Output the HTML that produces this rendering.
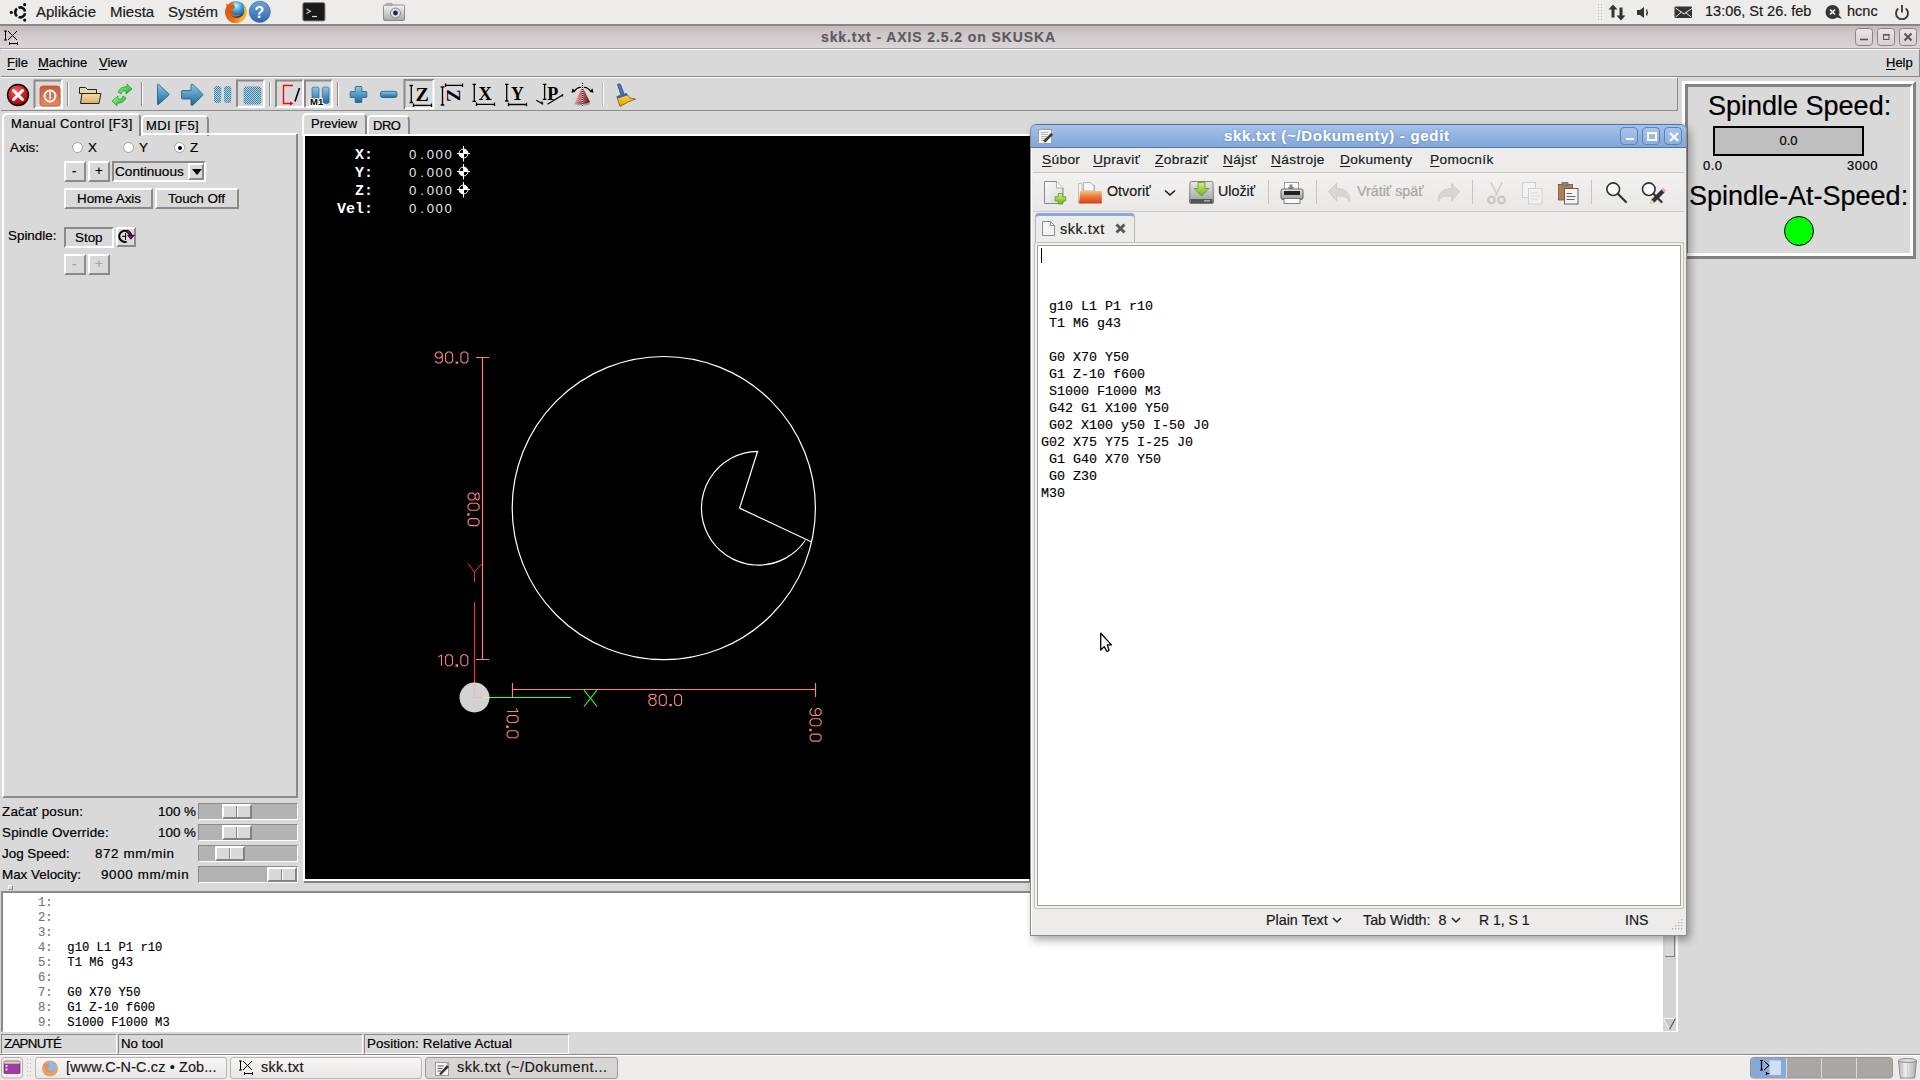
<!DOCTYPE html>
<html><head><meta charset="utf-8">
<style>
*{margin:0;padding:0;box-sizing:border-box}
html,body{width:1920px;height:1080px;overflow:hidden;background:#d9d9d9;font-family:"Liberation Sans",sans-serif;color:#000}
.a{position:absolute}
.t{position:absolute;white-space:pre;line-height:1;-webkit-text-stroke:0.2px currentColor}
.mono{font-family:"Liberation Mono",monospace;-webkit-text-stroke:0.15px currentColor}
/* top panel */
#top{left:0;top:0;width:1920px;height:26px;background:#edeceb;border-bottom:2px solid #8b8685}
#top .t{font-size:15px;top:3.5px;color:#1a1a1a}
/* axis title */
#atitle{left:0;top:26px;width:1920px;height:23px;background:linear-gradient(#c2bcbf,#d0cacd 45%,#d9d4d6);border-bottom:1px solid #a39ea0}
/* menu */
#amenu{left:1px;top:49px;width:1919px;height:28px;background:#d9d9d9;border-top:1px solid #fff;border-bottom:1px solid #8a8a8a;border-right:1px solid #8a8a8a}
.ul{text-decoration:underline;text-underline-offset:2px}
/* toolbar */
#atool{left:1px;top:77px;width:1677px;height:34px;border-top:1px solid #fff;border-right:1px solid #8a8a8a;border-bottom:1px solid #8a8a8a}
.sep{position:absolute;top:84px;width:2px;height:22px;border-left:1px solid #8a8a8a;border-right:1px solid #fff}
.btnsunk{position:absolute;border:2px solid;border-color:#8a8a8a #fff #fff #8a8a8a}
.raised{position:absolute;background:#d9d9d9;border:2px solid;border-color:#fff #8a8a8a #8a8a8a #fff}
.tab{position:absolute;background:#d9d9d9;border:2px solid;border-bottom:none;border-color:#fff #8a8a8a #8a8a8a #fff;border-radius:5px 5px 0 0;font-size:13px}
#preview{left:305px;top:136px;width:726px;height:743px;background:#000;box-shadow:-2px -2px 0 #fff,-2px 2px 0 #fff,-1px 4px 0 #828282}

.radio{position:absolute;width:11px;height:11px;border-radius:50%;background:#fff;border:1px solid #a0a0a0}
.dot{position:absolute;left:3px;top:3px;width:4px;height:4px;border-radius:50%;background:#000}
.trough{position:absolute;left:198px;width:100px;height:17px;background:#b3b3b3;border:1px solid;border-color:#8a8a8a #fff #fff #8a8a8a}
.hdl{position:absolute;top:0;width:30px;height:15px;background:#d9d9d9;border:2px solid;border-color:#fff #828282 #828282 #fff}
.hdl:after{content:"";position:absolute;left:11.5px;top:0;width:1px;height:11px;background:#828282;box-shadow:1px 0 #fff}
.stc{position:absolute;top:1034px;height:20px;border:1px solid;border-color:#8a8a8a #fff #fff #8a8a8a;font-size:13.3px}
.task{position:absolute;top:1057px;height:22px;border:1px solid #b7b4b0;border-radius:3px;background:linear-gradient(#f7f6f5,#e9e8e6);font-size:14.4px;color:#1a1a1a;letter-spacing:0.3px}

.wbtn{position:absolute;top:3px;width:18px;height:18px;border:1px solid #5d82b8;border-radius:4px;background:linear-gradient(#a9c4ea,#8cafdf)}
.gsep{position:absolute;top:56px;width:1px;height:24px;background:#c4c2bf}
.gsep2{position:absolute;top:784px;width:1px;height:22px;background:#d6d4d1}
</style></head><body>

<!-- TOP PANEL -->
<div id="top" class="a">
  <div class="t" style="left:36px">Aplikácie</div>
  <div class="t" style="left:110px">Miesta</div>
  <div class="t" style="left:168px">Systém</div>
  <div class="t" style="left:1705px;font-size:14.5px">13:06, St 26. feb</div>
  <div class="t" style="left:1847px;font-size:14.5px">hcnc</div>
</div>


<svg class="a" style="left:0;top:0" width="1920" height="25">
<defs>
<radialGradient id="ffg" cx="0.55" cy="0.35" r="0.6"><stop offset="0" stop-color="#9fd0f0"/><stop offset="0.6" stop-color="#2f6fb5"/><stop offset="1" stop-color="#1a3f80"/></radialGradient>
<linearGradient id="hlp" x1="0" y1="0" x2="0" y2="1"><stop offset="0" stop-color="#6aa3dc"/><stop offset="1" stop-color="#2f69ad"/></linearGradient>
<linearGradient id="cam" x1="0" y1="0" x2="0" y2="1"><stop offset="0" stop-color="#f4f4f4"/><stop offset="1" stop-color="#a8a8a8"/></linearGradient>
</defs>
<!-- ubuntu logo -->
<path d="M16.99 16.23A5.0 5.0 0 0 1 16.99 8.57M18.49 7.70A5.0 5.0 0 0 1 25.12 11.53M25.12 13.27A5.0 5.0 0 0 1 18.49 17.10" fill="none" stroke="#111" stroke-width="2.6"/><circle cx="11.30" cy="12.40" r="1.6" fill="#111"/><circle cx="24.65" cy="4.69" r="1.6" fill="#111"/><circle cx="24.65" cy="20.11" r="1.6" fill="#111"/>
<!-- firefox -->
<defs><linearGradient id="fxo" x1="0" y1="0" x2="1" y2="0.3"><stop offset="0" stop-color="#d4500c"/><stop offset="0.6" stop-color="#e8741a"/><stop offset="1" stop-color="#f8c030"/></linearGradient>
<radialGradient id="fxb" cx="0.45" cy="0.25" r="0.75"><stop offset="0" stop-color="#c8f4ff"/><stop offset="0.45" stop-color="#3aa0e0"/><stop offset="1" stop-color="#0a3a8a"/></radialGradient></defs>
<circle cx="236" cy="12.2" r="11" fill="url(#fxo)"/>
<circle cx="237" cy="9.8" r="8.2" fill="url(#fxb)"/>
<path d="M226 3.5L229.5 5.5L233.5 4L235 7.2L233 9.3L231.2 12.6Q233.5 15.6 238.5 14.7L241.5 14.2Q239 16.8 234.5 16.5Q229 16 228 11Q227 7 226 3.5z" fill="#dc5a12"/>
<path d="M243.5 4.5Q246.8 8 246.5 13Q246 19 241 22L238.5 21Q244 17 244 11z" fill="#f6b428" opacity="0.9"/>
<!-- help -->
<circle cx="259.8" cy="11.8" r="10.6" fill="url(#hlp)" stroke="#2a5a98" stroke-width="0.6"/>
<text x="254.5" y="18" font-family="Liberation Sans" font-weight="bold" font-size="16px" fill="#fff">?</text>
<!-- terminal -->
<rect x="302.8" y="2.6" width="22.2" height="18.4" rx="1.8" fill="#1a1a1a" stroke="#8a8a8a" stroke-width="1"/>
<path d="M306.5 9l4 2.3-4 2.3" fill="none" stroke="#d8d8d8" stroke-width="1.1"/><path d="M312 16.5h5" stroke="#d8d8d8" stroke-width="1.2"/>
<!-- camera -->
<rect x="383.5" y="5" width="21" height="15.5" rx="1.5" fill="url(#cam)" stroke="#777" stroke-width="0.8"/>
<rect x="386" y="3.3" width="6" height="2.5" fill="#bbb" stroke="#888" stroke-width="0.5"/>
<circle cx="395.5" cy="13" r="5" fill="#ddd" stroke="#777" stroke-width="0.8"/><circle cx="395.5" cy="13" r="2.4" fill="#1a2a50"/>
<!-- right icons -->
<g fill="#bbb"><rect x="1598" y="4" width="1" height="1"/><rect x="1601" y="4" width="1" height="1"/><rect x="1598" y="7" width="1" height="1"/><rect x="1601" y="7" width="1" height="1"/><rect x="1598" y="10" width="1" height="1"/><rect x="1601" y="10" width="1" height="1"/><rect x="1598" y="13" width="1" height="1"/><rect x="1601" y="13" width="1" height="1"/><rect x="1598" y="16" width="1" height="1"/><rect x="1601" y="16" width="1" height="1"/><rect x="1598" y="19" width="1" height="1"/><rect x="1601" y="19" width="1" height="1"/></g>
<path d="M1613 4.5l-4.5 5h3v8h3v-8h3z" fill="#333"/><path d="M1621 20.5l4.5-5h-3v-8h-3v8h-3z" fill="#333"/>
<path d="M1637 10h3l4-3v11l-4-3h-3z" fill="#333"/><path d="M1646.5 9.5q1.5 3 0 6" fill="none" stroke="#333" stroke-width="1.3"/>
<rect x="1674.5" y="6.5" width="17.5" height="11.5" rx="1" fill="#333"/><path d="M1675.5 8l8.5 6 8.5-6M1675.5 17l6-5M1691 17l-6-5" fill="none" stroke="#eee" stroke-width="1"/>
<circle cx="1832.5" cy="12" r="7" fill="#333"/><path d="M1836 17l6 2-3-4z" fill="#333"/><path d="M1830 9.5l5 5M1835 9.5l-5 5" stroke="#eee" stroke-width="1.7"/>
<path d="M1898.3 8.5a6 6 0 1 0 7.4 0" fill="none" stroke="#333" stroke-width="1.8"/><path d="M1902 5v7.5" stroke="#333" stroke-width="1.8"/>
</svg>

<!-- AXIS TITLE -->
<div id="atitle" class="a">
  <div class="t" style="left:821px;top:4px;font-size:14px;font-weight:bold;color:#5e5a5c;letter-spacing:0.9px">skk.txt - AXIS 2.5.2 on SKUSKA</div>
</div>


<svg class="a" style="left:0;top:25px" width="1920" height="24" style="overflow:visible">
<g stroke="#000" stroke-width="1" fill="none"><path d="M5.5 6V15M4 6h3M4 15h3"/><path d="M8 6l9 9M17 6l-9 9"/><path d="M9.5 18.5h8M9.5 17v3M17.5 17v3" /></g>
<defs><linearGradient id="tbb" x1="0" y1="0" x2="0" y2="1"><stop offset="0" stop-color="#ebe5e8"/><stop offset="1" stop-color="#d6d0d3"/></linearGradient></defs>
<g><rect x="1855.5" y="3.5" width="17" height="17" rx="3" fill="url(#tbb)" stroke="#8a8486"/><path d="M1860 14.5h8" stroke="#555" stroke-width="1.6"/>
<rect x="1877.5" y="3.5" width="17" height="17" rx="3" fill="url(#tbb)" stroke="#8a8486"/><rect x="1883.5" y="9.5" width="5.5" height="5" fill="none" stroke="#555" stroke-width="1"/><path d="M1883 9.8h6.5" stroke="#555" stroke-width="1.6"/>
<rect x="1899.5" y="3.5" width="17" height="17" rx="3" fill="url(#tbb)" stroke="#8a8486"/><path d="M1904.5 8.5l7 7M1911.5 8.5l-7 7" stroke="#555" stroke-width="2"/></g>
</svg>

<!-- MENU -->
<div id="amenu" class="a">
  <div class="t" style="left:6px;top:6px;font-size:13px"><span class="ul">F</span>ile</div>
  <div class="t" style="left:37px;top:6px;font-size:13px"><span class="ul">M</span>achine</div>
  <div class="t" style="left:98px;top:6px;font-size:13px"><span class="ul">V</span>iew</div>
  <div class="t" style="left:1885px;top:6px;font-size:13px"><span class="ul">H</span>elp</div>
</div>

<!-- TOOLBAR -->
<div id="atool" class="a"></div>


<!-- TOOLBAR ICONS -->
<svg class="a" style="left:0;top:76px" width="660" height="36" viewBox="0 76 660 36">
<defs>
<radialGradient id="gr" cx="0.4" cy="0.3" r="0.7"><stop offset="0" stop-color="#ff5a5a"/><stop offset="1" stop-color="#a00000"/></radialGradient>
<linearGradient id="gb" x1="0" y1="0" x2="0" y2="1"><stop offset="0" stop-color="#8cc6e4"/><stop offset="1" stop-color="#1c6a9c"/></linearGradient>
<linearGradient id="gf" x1="0" y1="0" x2="0" y2="1"><stop offset="0" stop-color="#f6dca8"/><stop offset="1" stop-color="#d8b068"/></linearGradient>
<linearGradient id="gg" x1="0" y1="0" x2="1" y2="1"><stop offset="0" stop-color="#9cff9c"/><stop offset="1" stop-color="#10b010"/></linearGradient>
<linearGradient id="go" x1="0" y1="0" x2="0" y2="1"><stop offset="0" stop-color="#c4603c"/><stop offset="1" stop-color="#dd8a66"/></linearGradient>
<linearGradient id="gc" x1="0" y1="0" x2="1" y2="0"><stop offset="0" stop-color="#f0a0a0"/><stop offset="0.5" stop-color="#d05a50"/><stop offset="1" stop-color="#5a1010"/></linearGradient>
<linearGradient id="gy" x1="0" y1="0" x2="0" y2="1"><stop offset="0" stop-color="#ffe040"/><stop offset="1" stop-color="#e09a00"/></linearGradient>
<pattern id="dots" width="2" height="2" patternUnits="userSpaceOnUse"><rect width="1" height="1" fill="#2a6e9a"/><rect x="1" y="1" width="1" height="1" fill="#2a6e9a"/><rect x="1" width="1" height="1" fill="#a8d4ea"/><rect y="1" width="1" height="1" fill="#a8d4ea"/></pattern>
</defs>
<!-- estop -->
<circle cx="18" cy="95" r="10.5" fill="url(#gr)" stroke="#000" stroke-width="1.3"/>
<path d="M13.5 90.5l9 9M22.5 90.5l-9 9" stroke="#fff" stroke-width="3" stroke-linecap="round"/>
<!-- power sunken -->
<path d="M34.5 108V80.5H62" fill="none" stroke="#8a8a8a" stroke-width="2"/>
<path d="M35 108H62V80" fill="none" stroke="#fff" stroke-width="2"/>
<rect x="40" y="86" width="20" height="20" rx="3" fill="url(#go)" stroke="#d04a2a" stroke-width="0.8"/>
<circle cx="50" cy="96" r="5.5" fill="none" stroke="#fff" stroke-width="1.8"/>
<path d="M50 92V99" stroke="#fff" stroke-width="1.6"/>
<!-- sep -->
<path d="M67.5 82V106" stroke="#8a8a8a"/><path d="M68.5 82V106" stroke="#fff"/>
<!-- folder -->
<path d="M79.5 87.5h6l2 2h9v4h-17z" fill="#eed7a6" stroke="#222" stroke-width="1"/>
<path d="M80.5 103.5l1.5-10h19l-2 10z" fill="url(#gf)" stroke="#222" stroke-width="1"/>
<!-- reload -->
<path d="M118 92 Q121 86 127 87 L127 84 L132 89 L126 94 L126 91 Q122 90 121 94z" fill="url(#gg)" stroke="#0a8a0a" stroke-width="0.6"/>
<path d="M126 98 Q123 104 117 103 L117 106 L112 101 L118 96 L118 99 Q122 100 123 96z" fill="url(#gg)" stroke="#0a8a0a" stroke-width="0.6"/>
<!-- sep -->
<path d="M141.5 82V106" stroke="#8a8a8a"/><path d="M142.5 82V106" stroke="#fff"/>
<!-- play -->
<path d="M157.5 85.5 Q157 83.5 159 84.8 L168.5 93.5 Q169.5 94.5 168.5 95.5 L159 104 Q157 105.5 157.5 103.5z" fill="url(#gb)" stroke="#1a5a88" stroke-width="0.8"/>
<!-- step -->
<path d="M182.5 90.5h8.5v-5.5q0.5-1.5 2-0.5l9.5 9.5q0.7 0.8 0 1.6l-9.5 9.5q-1.5 1-2-0.5v-5.6h-8.5q-1-0-1-1v-6.5q0-1 1-1z" fill="url(#gb)" stroke="#1a5a88" stroke-width="0.8"/>
<!-- pause -->
<rect x="214" y="86" width="7.3" height="17" rx="2.5" fill="url(#dots)" opacity="0.85"/>
<rect x="224" y="86" width="7.3" height="17" rx="2.5" fill="url(#dots)" opacity="0.85"/>
<!-- stop sunken -->
<path d="M237 107V80.5H264" fill="none" stroke="#8a8a8a" stroke-width="2"/>
<path d="M237.5 107H264V80.5" fill="none" stroke="#fff" stroke-width="2"/>
<rect x="243.6" y="86.4" width="17.8" height="18.2" rx="2.5" fill="url(#dots)" opacity="0.85"/>
<path d="M269.5 82V106" stroke="#8a8a8a"/><path d="M270.5 82V106" stroke="#fff"/>
<!-- block delete sunken -->
<path d="M276 107V80.5H303" fill="none" stroke="#8a8a8a" stroke-width="2"/>
<path d="M276.5 107H303V80.5" fill="none" stroke="#fff" stroke-width="2"/>
<path d="M293 85.5H283.5V103.5H291" fill="none" stroke="#ff0000" stroke-width="1.3"/>
<path d="M290 101.5l3.5 2-3.5 2z" fill="#ff0000"/>
<path d="M299.5 88L295 101.5" stroke="#000" stroke-width="1.6"/>
<!-- M1 sunken -->
<path d="M305 107V80.5H332" fill="none" stroke="#8a8a8a" stroke-width="2"/>
<path d="M305.5 107H332V80.5" fill="none" stroke="#fff" stroke-width="2"/>
<rect x="312" y="87" width="7" height="16.5" rx="2" fill="url(#gb)" stroke="#1a5a88" stroke-width="0.6"/>
<rect x="322.3" y="87" width="6.8" height="16.5" rx="2" fill="url(#gb)" stroke="#1a5a88" stroke-width="0.6"/>
<text x="310" y="104.5" font-family="Liberation Sans" font-size="9.5px" font-weight="bold" fill="#000" stroke="#fff" stroke-width="2" paint-order="stroke">M1</text>
<path d="M337.5 82V106" stroke="#8a8a8a"/><path d="M338.5 82V106" stroke="#fff"/>
<!-- plus minus -->
<path d="M356 86.5h5q0.8 0 0.8 0.8v4.2h4.2q0.8 0 0.8 0.8v4.4q0 0.8-0.8 0.8h-4.2v4.2q0 0.8-0.8 0.8h-5q-0.8 0-0.8-0.8v-4.2h-4.2q-0.8 0-0.8-0.8v-4.4q0-0.8 0.8-0.8h4.2v-4.2q0-0.8 0.8-0.8z" fill="url(#gb)" stroke="#1a5a88" stroke-width="0.8"/>
<rect x="380.5" y="91.3" width="16.5" height="6.2" rx="2" fill="url(#gb)" stroke="#1a5a88" stroke-width="0.8"/>
<!-- Z sunken -->
<path d="M404.5 109V80H434" fill="none" stroke="#8a8a8a" stroke-width="2"/>
<path d="M405 108.5H433.5V80" fill="none" stroke="#fff" stroke-width="2"/>
<g stroke="#000" stroke-width="1.3" fill="none">
<path d="M411.3 85.5V102.5M409.5 85.5H413M409.5 102.5H413"/>
<path d="M413.5 105.3H431.5M413.5 103.5V107M431.5 103.5V107"/>
<path d="M442.5 87V105M440.7 87H444.3M440.7 105H444.3"/>
<path d="M445.5 85.3H462.5M445.5 83.5V87M462.5 83.5V87"/>
<path d="M474.3 84.3V101.3M472.5 84.3H476M472.5 101.3H476"/>
<path d="M476.5 104.3H494.5M476.5 102.5V106M494.5 102.5V106"/>
<path d="M506.7 84.3V101M505 84.3H508.5M505 101H508.5"/>
<path d="M508.5 104.5H526.5M508.5 102.7V106.3M526.5 102.7V106.3"/>
<path d="M544.6 84.3V99.3M542.8 84.3H546.4M542.8 99.3H546.4"/>
<path d="M536.3 100.2L543.3 104.3M542 101.5V104.3"/>
<path d="M547.5 104.3L563 94.8M562.5 94V96.5"/>
</g>
<g font-family="Liberation Serif" font-weight="bold" fill="#000">
<text x="415.5" y="101.2" font-size="19.5px" textLength="13.3" lengthAdjust="spacingAndGlyphs">Z</text>
<text transform="translate(446.5 90) rotate(90) skewX(-12)" font-size="15px" y="0" x="0" style="display:none">Z</text>
<text x="478.6" y="99.9" font-size="19.5px" textLength="13.3" lengthAdjust="spacingAndGlyphs">X</text>
<text x="511" y="99.9" font-size="19.5px" textLength="12.8" lengthAdjust="spacingAndGlyphs">Y</text>
<text x="547.3" y="99.9" font-size="19.5px" textLength="11" lengthAdjust="spacingAndGlyphs">P</text>
</g>
<text transform="translate(446.5 89.3) rotate(90)" font-family="Liberation Serif" font-weight="bold" font-size="19.5px" x="0" y="0" textLength="12.5" lengthAdjust="spacingAndGlyphs">Z</text>
<!-- cone -->
<path d="M582.5 87 L575 102 Q582.5 106 590 102z" fill="url(#gc)"/>
<ellipse cx="582.5" cy="103.5" rx="8" ry="2" fill="#333" opacity="0.35"/>
<path d="M582.5 83V107" stroke="#fff" stroke-width="1.2"/><path d="M582.5 83V107" stroke="#000" stroke-width="1.2" stroke-dasharray="1 1"/>
<path d="M573.5 92 Q578 86.5 581 87.5M591.5 92 Q587 86.5 584 87.5" fill="none" stroke="#000" stroke-width="1.3"/>
<path d="M571.5 93l1-4.5 3 2.5zM593.5 93l-1-4.5-3 2.5z" fill="#000"/>
<path d="M603.5 82V106" stroke="#fff"/><path d="M602.5 82V106" stroke="#8a8a8a" opacity="0.4"/>
<!-- broom -->
<path d="M617.5 84.5 Q619 83 620.5 84.5 L624.5 95 L621.5 96.5z" fill="#4a74c8" stroke="#1a3a7a" stroke-width="0.7"/>
<path d="M617 96.5 L626.5 93.5 L630 98 L635.5 99 L628 102 L620 106.5 Q618 101 617 96.5z" fill="url(#gy)" stroke="#6a4a00" stroke-width="0.7"/>
<path d="M616.5 96.5 L626.5 93.3 L627.5 95.5 L617.5 98.5z" fill="#3a64b8"/>
</svg>

<!-- TABS -->
<div class="tab" style="left:2px;top:113px;width:139px;height:23px"><span class="t" style="left:7px;top:2px;letter-spacing:0.4px">Manual Control [F3]</span></div>
<div class="tab" style="left:141px;top:115px;width:68px;height:21px"><span class="t" style="left:3px;top:2px;letter-spacing:0.4px">MDI [F5]</span></div>
<div class="tab" style="left:302px;top:113px;width:65px;height:23px"><span class="t" style="left:7px;top:2px">Preview</span></div>
<div class="tab" style="left:367px;top:115px;width:43px;height:21px"><span class="t" style="left:4px;top:2px;letter-spacing:-0.5px">DRO</span></div>

<!-- LEFT PANEL -->
<div class="a" style="left:141px;top:133px;width:156px;height:2px;background:#fff"></div>
<div class="a" style="left:2px;top:134px;width:296px;height:664px;border:2px solid;border-color:#fff #8a8a8a #8a8a8a #fff;border-top:none"></div>

<!-- PREVIEW -->
<div id="preview" class="a"></div>
<svg class="a" style="left:305px;top:136px" width="726" height="744" viewBox="305 136 726 744">
<g fill="none" stroke-width="1.2">
<circle cx="663.8" cy="508.1" r="151.6" stroke="#fff"/>
<path d="M739.6 508.1 L811.6 542.0" stroke="#fff"/>
<path d="M805.2 540.5 A56.9 56.9 0 1 1 757.6 451.3 L739.6 508.1" stroke="#fff"/>
<!-- Y dimension -->
<path d="M482.5 357.5V659.5M476 357.5H489M476 659.5H489" stroke="#f88282"/>
<path d="M474.5 602V697.5" stroke="#ff2a2a"/>
<path d="M512.5 689.5H816M512.5 683V697M815.5 683V697" stroke="#f88282"/>
<path d="M474.5 697.5H571" stroke="#33ff33"/>
<path d="M584 690L597 706.5M597 690L584 706.5" stroke="#33ff33"/>
<path d="M468 563.5L474.5 572L482 563.5M474.5 572V582" stroke="#ff3030" stroke-width="1"/>
</g>
<circle cx="474.5" cy="697.5" r="15" fill="#d2d2d2"/>
<path d="M474.5 682V697.5H490" fill="none" stroke="#ffb0b0" stroke-width="1"/>
<path d="M482.5 697.5H490" fill="none" stroke="#b0ffb0" stroke-width="1"/>
<defs>
<path id="g0" d="M2.5 0.5H5.5L7.5 2.5V9.5L5.5 11.5H2.5L0.5 9.5V2.5Z"/>
<path id="g8" d="M1.5 0.5H6.5L7.5 1.5V2.5L5.5 4.5H2.5L0.5 2.5V1.5ZM2.5 4.5H5.5L7.5 6.5V9.5L5.5 11.5H2.5L0.5 9.5V6.5Z"/>
<path id="g9" d="M7.5 4.5L5.5 6.5H2.5L0.5 4.5V2.5L2.5 0.5H5.5L7.5 2.5V9.5L5.5 11.5H2.5L0.5 9.5"/>
<path id="g1" d="M0.5 2.5L3.5 0.8V11.5"/>
<path id="gd" d="M0.8 10.5H2.2V11.8H0.8Z"/>
</defs><g fill="none" stroke="#f88282" stroke-width="1.1"><g transform="translate(434.8 351.5)"><use href="#g9" x="0.0"/><use href="#g0" x="10.3"/><use href="#gd" x="20.6"/><use href="#g0" x="25.6"/></g><g transform="translate(438 654.3)"><use href="#g1" x="0.0"/><use href="#g0" x="7.0"/><use href="#gd" x="17.3"/><use href="#g0" x="22.3"/></g><g transform="translate(648.5 694)"><use href="#g8" x="0.0"/><use href="#g0" x="10.3"/><use href="#gd" x="20.6"/><use href="#g0" x="25.6"/></g><g transform="translate(518.6 708) rotate(90)"><use href="#g1" x="0.0"/><use href="#g0" x="7.0"/><use href="#gd" x="17.3"/><use href="#g0" x="22.3"/></g><g transform="translate(821.6 708) rotate(90)"><use href="#g9" x="0.0"/><use href="#g0" x="10.3"/><use href="#gd" x="20.6"/><use href="#g0" x="25.6"/></g><g transform="translate(479.6 492.5) rotate(90)"><use href="#g8" x="0.0"/><use href="#g0" x="10.3"/><use href="#gd" x="20.6"/><use href="#g0" x="25.6"/></g></g>
<g font-family="Liberation Mono" font-weight="bold" font-size="15px" fill="#fff">
<text x="355" y="159">X:</text><text x="355" y="177">Y:</text><text x="355" y="195">Z:</text><text x="337" y="213">Vel:</text>
<g font-family="Liberation Sans" font-weight="normal" font-size="13.2px" fill="#e8e8e8"><text x="409 420.3 426.8 435.6 444.4" y="159">0.000</text><text x="409 420.3 426.8 435.6 444.4" y="177">0.000</text><text x="409 420.3 426.8 435.6 444.4" y="195">0.000</text><text x="409 420.3 426.8 435.6 444.4" y="213">0.000</text></g>
</g>
<g fill="#fff" stroke="#fff">
<g id="hm"><path d="M463.5 153.5V149A4.5 4.5 0 0 1 468 153.5zM463.5 153.5V158A4.5 4.5 0 0 1 459 153.5z" stroke="none"/><circle cx="463.5" cy="153.5" r="4.5" fill="none" stroke-width="1"/><path d="M457 153.5H470M463.5 146V161.5" stroke-width="1"/></g>
<use href="#hm" y="18"/><use href="#hm" y="36"/>
</g>
</svg>



<!-- LEFT PANEL CONTENT -->
<div id="lp" style="font-size:13.4px">
  <div class="t" style="left:10px;top:141px">Axis:</div>
  <div class="radio" style="left:72px;top:142px"></div><div class="t" style="left:88px;top:141px">X</div>
  <div class="radio" style="left:123px;top:142px"></div><div class="t" style="left:139px;top:141px">Y</div>
  <div class="radio" style="left:174px;top:142px"><div class="dot"></div></div><div class="t" style="left:190px;top:141px">Z</div>
  <div class="raised" style="left:64px;top:161px;width:22px;height:21px"></div><div class="t" style="left:72px;top:164px">-</div>
  <div class="raised" style="left:88px;top:161px;width:22px;height:21px"></div><div class="t" style="left:95px;top:164px">+</div>
  <div class="a" style="left:112px;top:161px;width:94px;height:21px;border:2px solid;border-color:#8a8a8a #fff #fff #8a8a8a"></div>
  <div class="t" style="left:115px;top:165px;font-size:13.6px">Continuous</div>
  <div class="raised" style="left:188px;top:163px;width:16px;height:17px"></div>
  <div class="a" style="left:192px;top:169px;width:0;height:0;border-left:5px solid transparent;border-right:5px solid transparent;border-top:6px solid #000"></div>
  <div class="raised" style="left:64px;top:188px;width:89px;height:21px"></div><div class="t" style="left:77px;top:192px">Home Axis</div>
  <div class="raised" style="left:155px;top:188px;width:84px;height:21px"></div><div class="t" style="left:168px;top:192px">Touch Off</div>
  <div class="t" style="left:8px;top:229px">Spindle:</div>
  <div class="btnsunk" style="left:64px;top:227px;width:50px;height:21px;background:#d9d9d9"></div><div class="t" style="left:75px;top:231px">Stop</div>
  <div class="raised" style="left:116px;top:227px;width:20px;height:20px"></div>
  <svg class="a" style="left:112px;top:224px" width="28" height="26" viewBox="112 224 28 26"><path d="M126.7 241.6A5.6 5.6 0 1 1 128.4 232" fill="none" stroke="#000" stroke-width="1.9"/><path d="M122.2 236.4H126.3M125.5 233.2V240" stroke="#000" stroke-width="1"/><path d="M126.5 231.3Q129.8 231.8 130.8 235.5" fill="none" stroke="#000" stroke-width="3"/><path d="M126.5 231.3Q129.8 231.8 130.8 235.5" fill="none" stroke="#8b008b" stroke-width="1.6"/><path d="M127.5 235.2L134.3 235.2L130.8 239.2z" fill="#8b008b" stroke="#000" stroke-width="0.8"/></svg>
  <div class="raised" style="left:64px;top:254px;width:22px;height:21px"></div><div class="t" style="left:72px;top:257px;color:#a3a3a3">-</div>
  <div class="raised" style="left:88px;top:254px;width:22px;height:21px"></div><div class="t" style="left:95px;top:257px;color:#a3a3a3">+</div>
</div>

<!-- SLIDERS -->
<div style="font-size:13.4px">
  <div class="t" style="left:2px;top:805px;letter-spacing:0.2px">Začať posun:</div><div class="t" style="left:158px;top:805px">100 %</div>
  <div class="trough" style="top:803px"><div class="hdl" style="left:23px"></div></div>
  <div class="t" style="left:2px;top:826px;letter-spacing:0.2px">Spindle Override:</div><div class="t" style="left:158px;top:826px">100 %</div>
  <div class="trough" style="top:824px"><div class="hdl" style="left:23px"></div></div>
  <div class="t" style="left:2px;top:847px">Jog Speed:</div><div class="t" style="left:95px;top:847px;letter-spacing:0.6px">872 mm/min</div>
  <div class="trough" style="top:845px"><div class="hdl" style="left:16px"></div></div>
  <div class="t" style="left:2px;top:868px">Max Velocity:</div><div class="t" style="left:101px;top:868px;letter-spacing:0.65px">9000 mm/min</div>
  <div class="trough" style="top:866px"><div class="hdl" style="left:68px"></div></div>
  <div class="a" style="left:8px;top:885px;width:5px;height:5px;border:1px solid #8a8a8a;border-top-color:#fff;border-left-color:#fff"></div>
</div>

<!-- TEXT AREA -->
<div class="a" style="left:1px;top:891px;width:1677px;height:142px;background:#fff;border:2px solid;border-color:#8a8a8a #fff #fff #8a8a8a"></div>
<div class="a mono" style="left:8.8px;top:896.4px;font-size:12.2px;line-height:15px;color:#000;white-space:pre"><span style="color:#777">    1: </span>
<span style="color:#777">    2: </span>
<span style="color:#777">    3: </span>
<span style="color:#777">    4: </span> g10 L1 P1 r10
<span style="color:#777">    5: </span> T1 M6 g43
<span style="color:#777">    6: </span>
<span style="color:#777">    7: </span> G0 X70 Y50
<span style="color:#777">    8: </span> G1 Z-10 f600
<span style="color:#777">    9: </span> S1000 F1000 M3</div>
<div class="a" style="left:1663px;top:893px;width:12.5px;height:138px;background:#d4d4d4"></div>
<div class="a" style="left:1665px;top:893px;width:10px;height:64px;background:#d9d9d9;border-right:1.5px solid #828282;border-bottom:1.5px solid #828282"></div>
<svg class="a" style="left:1663px;top:1018px" width="13" height="12"><path d="M0.5 0.5H12.5L6.5 11.5z" fill="#c8c8c8" stroke="#fff" stroke-width="0.8"/><path d="M12.5 0.5L6.5 11.5" stroke="#555" stroke-width="1.2"/></svg>

<!-- STATUS BAR -->
<div class="a" style="left:1px;top:1032px;width:1919px;height:21px;background:#d9d9d9"></div>
<div class="stc" style="left:1px;width:116px"><span class="t" style="left:2px;top:2px;letter-spacing:-0.7px">ZAPNUTÉ</span></div>
<div class="stc" style="left:118px;width:245px"><span class="t" style="left:2px;top:2px">No tool</span></div>
<div class="stc" style="left:364px;width:205px"><span class="t" style="left:2px;top:2px;letter-spacing:0.1px">Position: Relative Actual</span></div>

<!-- TASKBAR -->
<div class="a" style="left:0;top:1054px;width:1920px;height:26px;background:#edeceb;border-top:1px solid #8e8a87;box-shadow:inset 0 1px 0 #fff"></div>
<div class="task" style="left:35px;width:192px"><span class="t" style="left:30px;top:2px;letter-spacing:0.15px">[www.C-N-C.cz • Zob...</span></div>
<div class="task" style="left:230px;width:192px"><span class="t" style="left:30px;top:2px">skk.txt</span></div>
<div class="task" style="left:425px;width:193px;background:#d8d6d3;border-color:#9d9a96"><span class="t" style="left:31px;top:2px;letter-spacing:0.5px">skk.txt (~/Dokument...</span></div>



<!-- SPINDLE WIDGET -->
<div class="a" style="left:1682px;top:81px;width:234px;height:178px;border:3px solid;border-color:#fff #828282 #828282 #fff"></div>
<div class="a" style="left:1685px;top:84px;width:228px;height:172px;border:3px solid;border-color:#828282 #fff #fff #828282"></div>
<div class="t" style="left:1708px;top:92.5px;font-size:27px">Spindle Speed:</div>
<div class="a" style="left:1713px;top:126px;width:151px;height:30px;background:#bebebe;border:2px solid #000"></div>
<div class="t" style="left:1713px;width:151px;text-align:center;top:134px;font-size:13px">0.0</div>
<div class="t" style="left:1703px;top:159px;font-size:13px;letter-spacing:0.5px">0.0</div>
<div class="t" style="left:1847px;top:159px;font-size:13px;letter-spacing:0.5px">3000</div>
<div class="t" style="left:1689px;top:182.5px;font-size:27px">Spindle-At-Speed:</div>
<div class="a" style="left:1784px;top:216px;width:30px;height:30px;border-radius:50%;background:#00ff00;border:1px solid #000"></div>

<!-- GEDIT WINDOW -->
<div class="a" style="left:1030px;top:124px;width:657px;height:812px;box-shadow:3px 4px 8px rgba(0,0,0,0.35);border-radius:6px 6px 0 0"></div>
<div class="a" style="left:1030px;top:124px;width:657px;height:812px;background:#edeceb;border:1px solid #8d8b88;box-shadow:inset 1px 0 0 #fff;border-top:none;border-radius:6px 6px 0 0;overflow:hidden">
  <div class="a" style="left:-1px;top:0;width:657px;height:24px;background:linear-gradient(#a7c2e8,#8eb0de 60%,#83a7da);border:1px solid #4a74b0;border-radius:6px 6px 0 0"></div>
  <div class="t" style="left:193px;top:4px;font-size:15px;font-weight:bold;color:#fff;letter-spacing:0.7px;text-shadow:0 0 2px #4a6fa0">skk.txt (~/Dokumenty) - gedit</div>
  <div class="wbtn" style="left:589px"><div class="a" style="left:5px;top:10px;width:8px;height:2px;background:#fff"></div></div>
  <div class="wbtn" style="left:611px"><div class="a" style="left:4px;top:4px;width:10px;height:9px;border:2px solid #fff"></div></div>
  <div class="wbtn" style="left:633px"><svg class="a" style="left:3px;top:3px" width="12" height="12"><path d="M2 2L10 10M10 2L2 10" stroke="#fff" stroke-width="2.2"/></svg></div>
  <!-- gedit icon -->
  <svg class="a" style="left:7px;top:4px" width="17" height="17" viewBox="0 0 17 17"><rect x="0.5" y="1.5" width="13" height="14" fill="#f6f6f6" stroke="#a0a0a0"/><path d="M3 4.5h7M3 6.5h7M3 8.5h6M3 10.5h5M3 12.5h4" stroke="#9a9a9a" stroke-width="0.7"/><path d="M5.2 12.8L13.3 4.7l1.9 1.9-8.1 8.1z" fill="#3a3a3a"/><path d="M13.3 4.7l1.2-1.2 1.9 1.9-1.2 1.2z" fill="#e8a0d8"/><path d="M5.2 12.8l1.9 1.9-2.6 0.9z" fill="#f0e090"/></svg>
  <!-- menu -->
  <div style="font-size:13.7px;color:#1a1a1a;letter-spacing:0.35px">
  <div class="t" style="left:11px;top:29px"><span class="ul">S</span>úbor</div>
  <div class="t" style="left:62px;top:29px"><span class="ul">U</span>praviť</div>
  <div class="t" style="left:124px;top:29px"><span class="ul">Z</span>obraziť</div>
  <div class="t" style="left:192px;top:29px"><span class="ul">N</span>ájsť</div>
  <div class="t" style="left:240px;top:29px"><span class="ul">N</span>ástroje</div>
  <div class="t" style="left:309px;top:29px"><span class="ul">D</span>okumenty</div>
  <div class="t" style="left:399px;top:29px"><span class="ul">P</span>omocník</div>
  </div>
  <div class="a" style="left:2px;top:48px;width:651px;height:40px;background:linear-gradient(#f2f1f0,#e9e8e6);border-top:1px solid #c9c7c4;border-bottom:1px solid #c9c7c4"></div>
  <div style="font-size:14.3px;color:#1a1a1a">
  <div class="t" style="left:76px;top:60px">Otvoriť</div>
  <div class="t" style="left:187px;top:60px">Uložiť</div>
  <div class="t" style="left:326px;top:60px;color:#a6a5a3">Vrátiť späť</div>
  </div>
  <div class="gsep" style="left:237px"></div><div class="gsep" style="left:285px"></div><div class="gsep" style="left:441px"></div><div class="gsep" style="left:560px"></div>
  <!-- tab -->
  <div class="a" style="left:4px;top:89px;width:100px;height:31px;background:#edeceb;border:1px solid #b8b5b1;border-bottom:none;border-radius:4px 4px 0 0;border-top:3px solid #86a9da"></div>
  <div class="a" style="left:104px;top:118px;width:549px;height:1px;background:#b8b5b1"></div>
  <div class="t" style="left:29px;top:98px;font-size:14.3px;color:#1a1a1a;letter-spacing:0.6px">skk.txt</div>
  <svg class="a" style="left:83px;top:98px" width="13" height="13"><path d="M2.5 2.5L10.5 10.5M10.5 2.5L2.5 10.5" stroke="#585858" stroke-width="3"/></svg>
  <svg class="a" style="left:10px;top:96px" width="15" height="17"><path d="M1.5 1.5h8l4 4v10h-12z" fill="#f5f5f5" stroke="#8e8e8e"/><path d="M9.5 1.5v4h4" fill="none" stroke="#8e8e8e"/></svg>
  <!-- text view -->
  <div class="a" style="left:3px;top:118px;width:650px;height:667px;background:#fff;border:1px solid #c4c1bd;border-radius:2px;box-shadow:inset 0 0 0 2px #f2f1f0,inset 0 0 0 3px #a3a09c"></div>
  <div class="a" style="left:10px;top:124px;width:1px;height:15px;background:#000"></div>
  <div class="a mono" style="left:10px;top:123px;font-size:13.33px;line-height:17px;white-space:pre;color:#000">


 g10 L1 P1 r10
 T1 M6 g43

 G0 X70 Y50
 G1 Z-10 f600
 S1000 F1000 M3
 G42 G1 X100 Y50
 G02 X100 y50 I-50 J0
G02 X75 Y75 I-25 J0
 G1 G40 X70 Y50
 G0 Z30
M30</div>
  <!-- status bar -->
  <div style="font-size:14.3px;color:#1a1a1a">
  <div class="t" style="left:235px;top:789px">Plain Text</div>
  <svg class="a" style="left:301px;top:793px" width="10" height="7"><path d="M1 1l4 4 4-4" fill="none" stroke="#222" stroke-width="1.5"/></svg>
  <div class="t" style="left:332px;top:789px">Tab Width:&nbsp; 8</div>
  <svg class="a" style="left:420px;top:793px" width="10" height="7"><path d="M1 1l4 4 4-4" fill="none" stroke="#222" stroke-width="1.5"/></svg>
  <div class="t" style="left:448px;top:789px;font-size:14px">R 1, S 1</div>
  <div class="t" style="left:594px;top:789px;font-size:14px">INS</div>
  <svg class="a" style="left:641px;top:794px" width="12" height="12"><g fill="#b5b2ae"><rect x="9" y="1" width="1.3" height="1.3"/><rect x="6" y="4" width="1.3" height="1.3"/><rect x="9" y="4" width="1.3" height="1.3"/><rect x="3" y="7" width="1.3" height="1.3"/><rect x="6" y="7" width="1.3" height="1.3"/><rect x="9" y="7" width="1.3" height="1.3"/><rect x="0" y="10" width="1.3" height="1.3"/><rect x="3" y="10" width="1.3" height="1.3"/><rect x="6" y="10" width="1.3" height="1.3"/><rect x="9" y="10" width="1.3" height="1.3"/></g></svg>
  </div>
  
</div>



<!-- GEDIT TOOLBAR ICONS -->
<svg class="a" style="left:1030px;top:172px" width="657" height="42" viewBox="1030 172 657 42">
<defs>
<linearGradient id="pg" x1="0" y1="0" x2="1" y2="1"><stop offset="0" stop-color="#fafafa"/><stop offset="1" stop-color="#d8d8d8"/></linearGradient>
<linearGradient id="og" x1="0" y1="0" x2="0" y2="1"><stop offset="0" stop-color="#f8c080"/><stop offset="0.4" stop-color="#f08040"/><stop offset="1" stop-color="#d83a10"/></linearGradient>
<linearGradient id="dg" x1="0" y1="0" x2="0" y2="1"><stop offset="0" stop-color="#e8e8e8"/><stop offset="1" stop-color="#9a9a9a"/></linearGradient>
<linearGradient id="grn" x1="0" y1="0" x2="0" y2="1"><stop offset="0" stop-color="#d8f080"/><stop offset="1" stop-color="#70b020"/></linearGradient>
</defs>
<!-- new -->
<path d="M1044.5 181.5h12l6.5 6.5v15.5h-18.5z" fill="url(#pg)" stroke="#888" stroke-width="1"/>
<path d="M1056.5 181.5v6.5h6.5" fill="#fff" stroke="#999" stroke-width="0.8"/>
<path d="M1058.3 193.5h4.3v3.2h3.2v4.3h-3.2v3h-4.3v-3h-3.2v-4.3h3.2z" fill="url(#grn)" stroke="#5a9a20" stroke-width="0.8"/>
<!-- open -->
<path d="M1078.5 183.5h3.5v19.5h-3.5z" fill="#f4f4f4" stroke="#aaa" stroke-width="0.7"/>
<path d="M1083.5 182.5h7l3.5 3.5v5h-10.5z" fill="#f8f8f8" stroke="#999" stroke-width="0.7"/>
<path d="M1094.5 184.5v7" stroke="#aaa" stroke-width="0.8"/>
<path d="M1080 191h21.8v12.6h-22.8z" fill="url(#og)"/>
<!-- dropdown chevron -->
<path d="M1165 190.5l5 4.5 5-4.5" fill="none" stroke="#111" stroke-width="1.5"/>
<!-- save -->
<path d="M1191.5 181.5h20q1.5 0 1.5 1.5l0.5 19q0 1.5-1.5 1.5h-21q-1.5 0-1.5-1.5l0.5-19q0-1.5 1.5-1.5z" fill="url(#dg)" stroke="#666" stroke-width="0.8"/>
<rect x="1190.5" y="199" width="22" height="4" fill="#555"/><rect x="1204" y="200" width="6" height="1.6" fill="#aaa"/>
<path d="M1198 182.5h7v6h4l-7.5 7.5-7.5-7.5h4z" fill="url(#grn)" stroke="#5a9a20" stroke-width="0.8"/>
<!-- printer -->
<rect x="1284.5" y="182.5" width="14" height="8" fill="#fafafa" stroke="#888" stroke-width="0.8"/>
<path d="M1289.5 184.5h3v2.5h2l-3.5 3-3.5-3h2z" fill="#888"/>
<rect x="1281" y="189" width="22" height="10.5" rx="2" fill="url(#dg)" stroke="#444" stroke-width="0.8"/>
<rect x="1284" y="191" width="16" height="4" fill="#222"/>
<rect x="1284" y="198.5" width="16" height="5" fill="#fafafa" stroke="#666" stroke-width="0.8"/>
<!-- undo (disabled) -->
<path d="M1328.5 191.5l8-8v5q9 0 12 6q2 4 1 7q-2-5-7-5.5h-6v5z" fill="#d8d7d5" stroke="#c8c7c5" stroke-width="0.8"/>
<path d="M1459.5 191.5l-8-8v5q-9 0-12 6q-2 4-1 7q2-5 7-5.5h6v5z" fill="#d8d7d5" stroke="#c8c7c5" stroke-width="0.8"/>
<!-- cut disabled -->
<g fill="none" stroke="#c8c6c4" stroke-width="1.3"><path d="M1491 182.5l6.5 13M1502 182.5l-6.5 13"/><circle cx="1491.5" cy="200" r="3.3" stroke-width="2.2"/><circle cx="1501.5" cy="200" r="3.3" stroke-width="2.2"/></g>
<!-- copy disabled -->
<rect x="1522.5" y="182.5" width="13" height="15" fill="#f2f2f2" stroke="#d0d0d0"/>
<rect x="1528.5" y="188.5" width="13.5" height="15.5" fill="#f2f2f2" stroke="#d0d0d0"/>
<path d="M1530.5 193h8M1530.5 196h9M1530.5 199h7.5" stroke="#d8d8d8"/>
<!-- paste -->
<rect x="1558.5" y="184.5" width="14" height="15.5" fill="#b08050" stroke="#7a5530" stroke-width="0.8"/>
<rect x="1562" y="182.5" width="6" height="3" fill="#888" stroke="#555" stroke-width="0.6"/>
<rect x="1564.5" y="188.5" width="13.5" height="15.5" fill="#f4f4f4" stroke="#555" stroke-width="0.9"/>
<path d="M1566.5 193.5h5.5M1566.5 196.5h9M1566.5 199.5h8" stroke="#666"/>
<!-- find -->
<circle cx="1613.2" cy="189.2" r="6.3" fill="#fcfcfc" stroke="#333" stroke-width="1.6"/><path d="M1617.8 193.8l8.2 8.2" stroke="#333" stroke-width="2.2" stroke-linecap="round"/>
<circle cx="1648.8" cy="189.2" r="6.3" fill="#fcfcfc" stroke="#333" stroke-width="1.6"/><path d="M1653.4 193.8l8.2 8.2" stroke="#333" stroke-width="2.2" stroke-linecap="round"/>
<path d="M1650.5 203.5l1-4 10-10 3 3-10 10z" fill="#333"/><path d="M1661.5 189.5l1.8-1.8 3 3-1.8 1.8z" fill="#e8a0d8"/><path d="M1650.5 203.5l1-4 3 3z" fill="#f0e080"/>
</svg>

<svg class="a" style="left:1090px;top:625px" width="30" height="35" viewBox="1090 625 30 35"><path d="M1100.7 633.2V650L1104.2 646.6L1106.8 651.2Q1108.3 651.6 1109 650L1107.3 644.9H1111.5z" fill="#fafafa" stroke="#000" stroke-width="1.3" stroke-linejoin="round"/></svg>
<svg class="a" style="left:0;top:1053px" width="1920" height="27">
<rect x="1.5" y="4.5" width="21" height="20.5" rx="3" fill="#efeeed" stroke="#b3b0ac"/>
<rect x="4" y="8" width="16" height="12.5" rx="1" fill="#a23aa8" stroke="#5a1a5a" stroke-width="0.6"/>
<rect x="4.3" y="8.3" width="15.4" height="2.4" fill="#d0e0a0"/><rect x="5.5" y="12" width="2" height="2" fill="#f0d0f0"/><rect x="5.5" y="15.5" width="2" height="2" fill="#f0d0f0"/>
<g fill="#c0bebb"><rect x="27" y="6" width="1" height="1"/><rect x="30" y="6" width="1" height="1"/><rect x="27" y="10" width="1" height="1"/><rect x="30" y="10" width="1" height="1"/><rect x="27" y="14" width="1" height="1"/><rect x="30" y="14" width="1" height="1"/><rect x="27" y="18" width="1" height="1"/><rect x="30" y="18" width="1" height="1"/><rect x="27" y="22" width="1" height="1"/><rect x="30" y="22" width="1" height="1"/></g>
<circle cx="50" cy="15.5" r="8" fill="#eaa064"/><circle cx="51" cy="13.8" r="5.6" fill="#8fb8e0"/><path d="M43 10.5L45.5 11.5L48.5 10.5L49.5 12.8L48 14.3L47 16.5Q48.8 18.5 52.5 17.8L54.8 17.4Q52.8 19.6 49.6 19.4Q45.5 19 44.8 15.3Q44 12.8 43 10.5z" fill="#e49058"/>
<g stroke="#000" stroke-width="1" fill="none"><path d="M240.5 8V17M239 8h3M239 17h3"/><path d="M243 8l9 9M252 8l-9 9"/><path d="M244.5 20.5h8M244.5 19v3M252.5 19v3"/></g>
<rect x="435.5" y="9.5" width="13" height="13" fill="#f4f4f4" stroke="#9a9a9a"/><path d="M437.5 13h6M437.5 15.5h5M437.5 18h4" stroke="#555"/><path d="M439 21L447 12l2 2-8 8z" fill="#333"/><path d="M447 10l2 2" stroke="#e090c0" stroke-width="2"/>
<!-- workspace switcher -->
<rect x="1750.5" y="4.5" width="142" height="20.5" rx="3" fill="#aaa6a3" stroke="#9a9794"/>
<rect x="1751" y="5" width="35" height="19.5" fill="#86a9da"/><rect x="1769.5" y="7.5" width="11.5" height="14.5" fill="#cfe0f6"/>
<path d="M1786.5 5v20M1821.5 5v20M1856.5 5v20" stroke="#dcdad8"/>
<g stroke="#000" stroke-width="1.2" fill="none"><path d="M1761.5 7.5V17M1760 7.5h3M1760 17h3"/><path d="M1764 8l5 4.5-5 4.5" stroke="#fff" stroke-width="2.2"/><path d="M1764 8l5 4.5-5 4.5"/><path d="M1766.5 20.5h3M1766.5 19v3"/></g>
<!-- trash -->
<defs><linearGradient id="trg" x1="0" y1="0" x2="1" y2="0"><stop offset="0" stop-color="#b8b8b8"/><stop offset="0.4" stop-color="#f0f0f0"/><stop offset="1" stop-color="#a8a8a8"/></linearGradient></defs>
<path d="M1898.5 7.5h18l-1.8 17.5h-14.4z" fill="url(#trg)" stroke="#7a7a7a" stroke-width="0.8"/>
<ellipse cx="1907.5" cy="7.5" rx="9" ry="2" fill="#d8d8d8" stroke="#7a7a7a" stroke-width="0.8"/>
<path d="M1902.5 10v14M1907.5 10v14.5M1912.5 10v14" stroke="#c8c8c8" stroke-width="0.7"/>
</svg>

</body></html>
